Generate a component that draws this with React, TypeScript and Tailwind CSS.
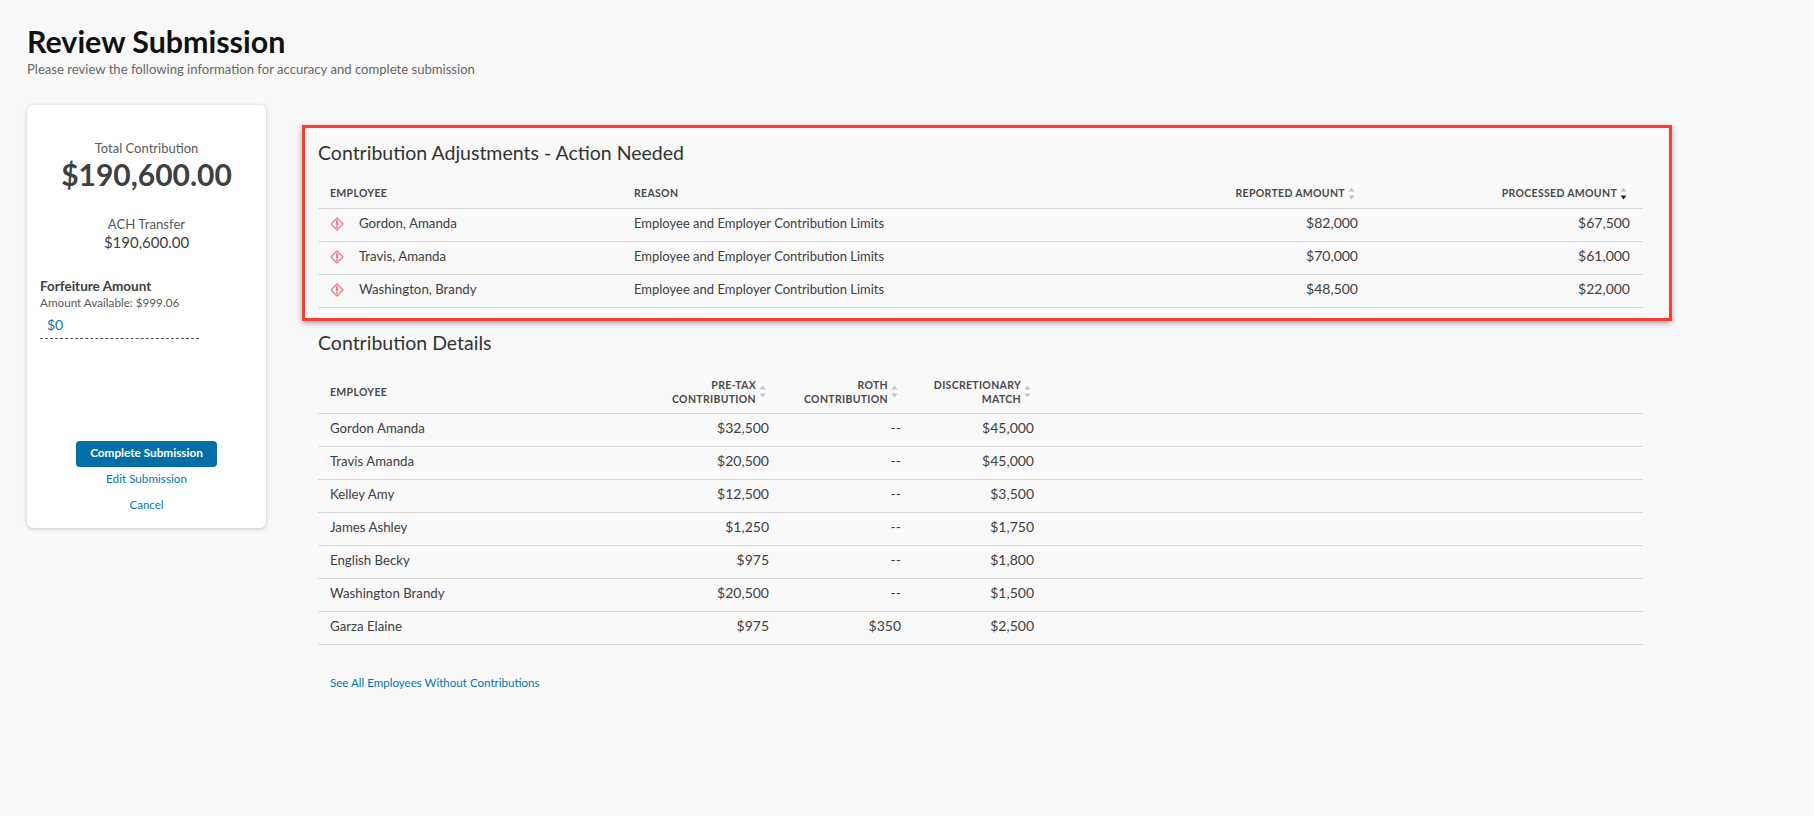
const ADJUSTMENTS = [
  { name: "Gordon, Amanda", reason: "Employee and Employer Contribution Limits", reported: "$82,000", processed: "$67,500" },
  { name: "Travis, Amanda", reason: "Employee and Employer Contribution Limits", reported: "$70,000", processed: "$61,000" },
  { name: "Washington, Brandy", reason: "Employee and Employer Contribution Limits", reported: "$48,500", processed: "$22,000" },
];

const DETAILS = [
  { name: "Gordon Amanda", pretax: "$32,500", roth: "--", match: "$45,000" },
  { name: "Travis Amanda", pretax: "$20,500", roth: "--", match: "$45,000" },
  { name: "Kelley Amy", pretax: "$12,500", roth: "--", match: "$3,500" },
  { name: "James Ashley", pretax: "$1,250", roth: "--", match: "$1,750" },
  { name: "English Becky", pretax: "$975", roth: "--", match: "$1,800" },
  { name: "Washington Brandy", pretax: "$20,500", roth: "--", match: "$1,500" },
  { name: "Garza Elaine", pretax: "$975", roth: "$350", match: "$2,500" },
];

function SortArrows({ active }: { active?: boolean }) {
  return (
    <svg width="7" height="13" viewBox="0 0 7 13" className="shrink-0">
      <path d="M3.5 0.5 L6.5 4.5 H0.5 Z" fill="#c4c4c4" />
      <path d="M0.5 8.5 H6.5 L3.5 12.5 Z" fill={active ? "#222222" : "#c4c4c4"} />
    </svg>
  );
}

function WarnIcon() {
  return (
    <svg width="14" height="14" viewBox="0 0 14 14" className="shrink-0">
      <path d="M7 1 L13 7 L7 13 L1 7 Z" fill="none" stroke="#f7718a" strokeWidth="1.2" strokeLinejoin="round" />
      <path d="M7 3.9 V7.7" stroke="#f7718a" strokeWidth="1.9" strokeLinecap="round" />
      <circle cx="7" cy="10" r="1" fill="#f7718a" />
    </svg>
  );
}

export default function App() {
  return (
    <div className="min-h-[816px] bg-[#f9f9f9] px-[27px] pt-[23px] font-['Lato','Noto_Sans',sans-serif] text-[#404040]">
      <h1 className="text-[30.4px] leading-9 font-bold text-[#111111]">Review Submission</h1>
      <p className="text-[13.1px] leading-5 text-[#666666]">
        Please review the following information for accuracy and complete submission
      </p>

      <div className="mt-[26px] flex items-start gap-9">
        <aside className="w-[239px] shrink-0 rounded-md bg-white pt-[33px] pb-[15px] shadow-[0_1px_4px_rgba(0,0,0,0.22)]">
          <div className="text-center">
            <div className="text-[13px] leading-5 text-[#5a5a5a]">Total Contribution</div>
            <div className="text-[30px] leading-8 font-bold text-[#404040]">$190,600.00</div>
            <div className="mt-6 text-[13.2px] leading-5 text-[#5a5a5a]">ACH Transfer</div>
            <div className="text-[15px] leading-4 text-[#404040]">$190,600.00</div>
          </div>

          <div className="mx-[13px] mt-[27px]">
            <div className="text-[13.5px] leading-[18px] font-bold text-[#404040]">Forfeiture Amount</div>
            <div className="text-[11.7px] leading-[14px] text-[#5a5a5a]">Amount Available: $999.06</div>
            <div className="mt-1.5 w-[159px] border-b border-dashed border-[#555555] pb-[3px] pl-[7px] text-sm leading-5 text-[#0077b0]">
              $0
            </div>
          </div>

          <div className="mt-[102px] flex flex-col items-center">
            <button className="h-[26px] w-[141px] rounded bg-[#006fa6] pb-0.5 text-[11.75px] font-bold text-white">
              Complete Submission
            </button>
            <a className="mt-[3px] text-[11.7px] leading-4 text-[#0077b0]">Edit Submission</a>
            <a className="mt-[11px] text-[11.5px] leading-4 text-[#0077b0]">Cancel</a>
          </div>
        </aside>

        <main className="w-[1370px]">
          <section className="mt-5 border-[3px] border-[#ff3b30] pt-[11px] pr-[26px] pb-[10px] pl-[13px] shadow-[0_2px_6px_rgba(0,0,0,0.35)]">
            <h2 className="text-[19.5px] leading-7 text-[#333333]">Contribution Adjustments - Action Needed</h2>
            <div className="mt-[11px] grid h-[31px] grid-cols-[303px_500px_250px_272px] items-center border-b border-[#d9d9d9] text-[10.5px] font-bold tracking-[0.03em] text-[#4a4a4a] uppercase">
              <div className="pt-0.5 pl-3">Employee</div>
              <div className="pt-0.5 pl-[13px]">Reason</div>
              <div className="flex items-center justify-end gap-[3px] pr-4">
                <span className="pt-0.5">Reported Amount</span> <SortArrows />
              </div>
              <div className="flex items-center justify-end gap-[3px] pr-4">
                <span className="pt-0.5">Processed Amount</span> <SortArrows active />
              </div>
            </div>
            {ADJUSTMENTS.map((row) => (
              <div
                key={row.name}
                className="grid h-[33px] grid-cols-[303px_500px_250px_272px] items-center border-b border-[#d9d9d9] pb-0.5 text-[13px]"
              >
                <div className="flex items-center gap-[15px] pl-3 text-[13.25px]">
                  <WarnIcon />
                  {row.name}
                </div>
                <div className="pl-[13px]">{row.reason}</div>
                <div className="pr-[13px] pb-0.5 text-right text-sm">{row.reported}</div>
                <div className="pr-[13px] pb-0.5 text-right text-sm">{row.processed}</div>
              </div>
            ))}
          </section>

          <section className="mt-2 w-[1341px] pl-4">
            <h2 className="text-[19.5px] leading-7 text-[#333333]">Contribution Details</h2>
            <div className="mt-[13px] grid h-[44px] grid-cols-[332px_132px_132px_133px_1fr] items-center border-b border-[#d9d9d9] text-[10.5px] leading-[14px] font-bold tracking-[0.03em] text-[#4a4a4a] uppercase">
              <div className="pl-3">Employee</div>
              <div className="flex items-center justify-end gap-[3px] pr-4 text-right">
                <span>
                  Pre-tax
                  <br />
                  Contribution
                </span>
                <SortArrows />
              </div>
              <div className="flex items-center justify-end gap-[3px] pr-4 text-right">
                <span>
                  Roth
                  <br />
                  Contribution
                </span>
                <SortArrows />
              </div>
              <div className="flex items-center justify-end gap-[3px] pr-4 text-right">
                <span>
                  Discretionary
                  <br />
                  Match
                </span>
                <SortArrows />
              </div>
            </div>
            {DETAILS.map((row) => (
              <div
                key={row.name}
                className="grid h-[33px] grid-cols-[332px_132px_132px_133px_1fr] items-center border-b border-[#d9d9d9] pb-0.5 text-[13px]"
              >
                <div className="pl-3 text-[13.25px]">{row.name}</div>
                <div className="pr-[13px] pb-0.5 text-right text-sm">{row.pretax}</div>
                <div className="pr-[13px] pb-0.5 text-right text-sm">{row.roth}</div>
                <div className="pr-[13px] pb-0.5 text-right text-sm">{row.match}</div>
              </div>
            ))}
            <a className="mt-[30px] block pl-3 text-[11.55px] leading-4 text-[#0077b0]">
              See All Employees Without Contributions
            </a>
          </section>
        </main>
      </div>
    </div>
  );
}
